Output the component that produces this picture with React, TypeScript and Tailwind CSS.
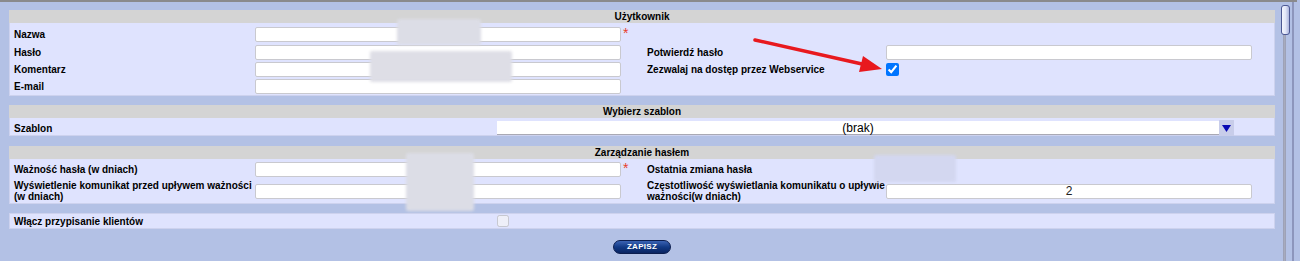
import React from "react";

const font = { fontFamily: '"Liberation Sans", Arial, sans-serif' };

function Field({ value }: { value?: string }) {
  return (
    <div className="h-[15px] w-full bg-white border border-[#c9c9cf] rounded-[2px] flex items-center justify-center text-[12px] leading-none text-[#222]">
      {value}
    </div>
  );
}

function Star() {
  return <span className="text-[#e8402a] text-[14px] leading-none pl-[2px] self-start -mt-[1px]">*</span>;
}

function Header({ title }: { title: string }) {
  return (
    <div className="h-[13px] bg-[#d4d4d4] flex items-center justify-center text-[10px] font-bold leading-none text-black">
      {title}
    </div>
  );
}

const label = "text-[10px] font-bold leading-[11px] text-black";
const cols = "grid grid-cols-[241px_366px_26px_239px_366px] pl-[4px]";

export default function App() {
  return (
    <div className="relative w-[1300px] h-[261px] bg-[#b3c1e5] flex flex-col overflow-hidden" style={font}>
      <div className="h-[2px] w-[1297px] bg-[#8a8a8c]" />
      <div className="flex flex-1">
        <div className="w-[1279px] pl-[9px] pr-[4px] pt-[8px] flex flex-col">
          {/* Użytkownik */}
          <div>
            <Header title="Użytkownik" />
            <div className="bg-[#dfe3fe] border border-t-0 border-[#cdd2ee] pt-[4px] pb-[1px] flex flex-col">
              <div className={`${cols} h-[15px] items-center`}>
                <span className={label}>Nazwa</span>
                <Field />
                <Star />
                <span />
                <span />
              </div>
              <div className={`${cols} h-[15px] items-center mt-[3px]`}>
                <span className={label}>Hasło</span>
                <Field />
                <span />
                <span className={label}>Potwierdź hasło</span>
                <Field />
              </div>
              <div className={`${cols} h-[15px] items-center mt-[2px]`}>
                <span className={label}>Komentarz</span>
                <Field />
                <span />
                <span className={label}>Zezwalaj na dostęp przez Webservice</span>
                <div className="flex items-center">
                  <input type="checkbox" defaultChecked className="m-0 w-[13px] h-[13px]" />
                </div>
              </div>
              <div className={`${cols} h-[15px] items-center mt-[2px]`}>
                <span className={label}>E-mail</span>
                <Field />
                <span />
                <span />
                <span />
              </div>
            </div>
          </div>

          {/* Wybierz szablon */}
          <div className="mt-[9px]">
            <Header title="Wybierz szablon" />
            <div className="bg-[#dfe3fe] border border-t-0 border-[#cdd2ee] pt-[2px] pb-0 pl-[4px] grid grid-cols-[483px_722px_15px] items-center h-[18px]">
              <span className={label}>Szablon</span>
              <div className="h-[14px] bg-white border-b border-[#a9a9b4] flex items-center justify-center text-[12px] leading-none text-black">
                (brak)
              </div>
              <div className="h-[16px] bg-[#c8cdea] flex items-center justify-center">
                <svg width="9" height="7" viewBox="0 0 9 7">
                  <polygon points="0,0 9,0 4.5,7" fill="#0a0ab4" />
                </svg>
              </div>
            </div>
          </div>

          {/* Zarządzanie hasłem */}
          <div className="mt-[10px]">
            <Header title="Zarządzanie hasłem" />
            <div className="bg-[#dfe3fe] border border-t-0 border-[#cdd2ee] pt-[3px] pb-[1px] flex flex-col">
              <div className={`${cols} h-[15px] items-center`}>
                <span className={label}>Ważność hasła (w dniach)</span>
                <Field />
                <Star />
                <span className={label}>Ostatnia zmiana hasła</span>
                <span />
              </div>
              <div className={`${cols} h-[22px] items-center mt-[3px]`}>
                <span className={label}>
                  Wyświetlenie komunikat przed upływem ważności
                  <br />
                  (w dniach)
                </span>
                <Field />
                <span />
                <span className={label}>
                  Częstotliwość wyświetlania komunikatu o upływie
                  <br />
                  ważności(w dniach)
                </span>
                <Field value="2" />
              </div>
            </div>
          </div>

          {/* Włącz przypisanie klientów */}
          <div className="mt-[9px] h-[16px] bg-[#dfe3fe] border border-[#cdd2ee] pl-[4px] grid grid-cols-[483px_auto] items-center">
            <span className={label}>Włącz przypisanie klientów</span>
            <div className="flex items-center">
              <input type="checkbox" disabled className="m-0 w-[12px] h-[12px]" />
            </div>
          </div>

          <div className="mt-[11px] flex justify-center pl-[0px]">
            <button className="w-[58px] h-[14px] rounded-full border border-[#0b1d4e] bg-gradient-to-b from-[#3b63b4] via-[#123a86] to-[#0a2462] text-white text-[8px] font-bold leading-none tracking-[0.3px] flex items-center justify-center">
              ZAPISZ
            </button>
          </div>
        </div>

        {/* scrollbar */}
        <div className="relative flex-1">
          <div className="absolute left-[4px] top-[30px] bottom-0 w-[3px] bg-[#a7abbe] border-x border-[#9da2b8]" />
          <div className="absolute left-[2px] top-[3px] w-[9px] h-[30px] rounded-[3px] border border-[#4d5894] bg-gradient-to-r from-[#f4f6ff] via-[#e2e6f8] to-[#aeb6de]" />
          <div className="absolute left-[13px] top-0 bottom-0 w-[2px] bg-[#8d96bc]" />
        </div>
      </div>

      {/* blurred redactions */}
      <div className="absolute left-[397px] top-[19px] w-[84px] h-[26px] bg-[#dcdde6] rounded-[2px] blur-[1.5px]" />
      <div className="absolute left-[370px] top-[51px] w-[142px] h-[31px] bg-[#dedee6] rounded-[2px] blur-[1.5px]" />
      <div className="absolute left-[406px] top-[153px] w-[68px] h-[58px] bg-[#dcdde6] rounded-[2px] blur-[1.5px]" />
      <div className="absolute left-[874px] top-[155px] w-[82px] h-[27px] bg-[#d3d7f0] rounded-[2px] blur-[1.5px]" />

      {/* red arrow */}
      <svg className="absolute left-0 top-0 pointer-events-none" width="1300" height="261">
        <line x1="755" y1="40" x2="862" y2="64" stroke="#e8191e" strokeWidth="3.5" strokeLinecap="round" />
        <polygon points="882,69 859,72 863,56" fill="#e8191e" />
      </svg>
    </div>
  );
}
